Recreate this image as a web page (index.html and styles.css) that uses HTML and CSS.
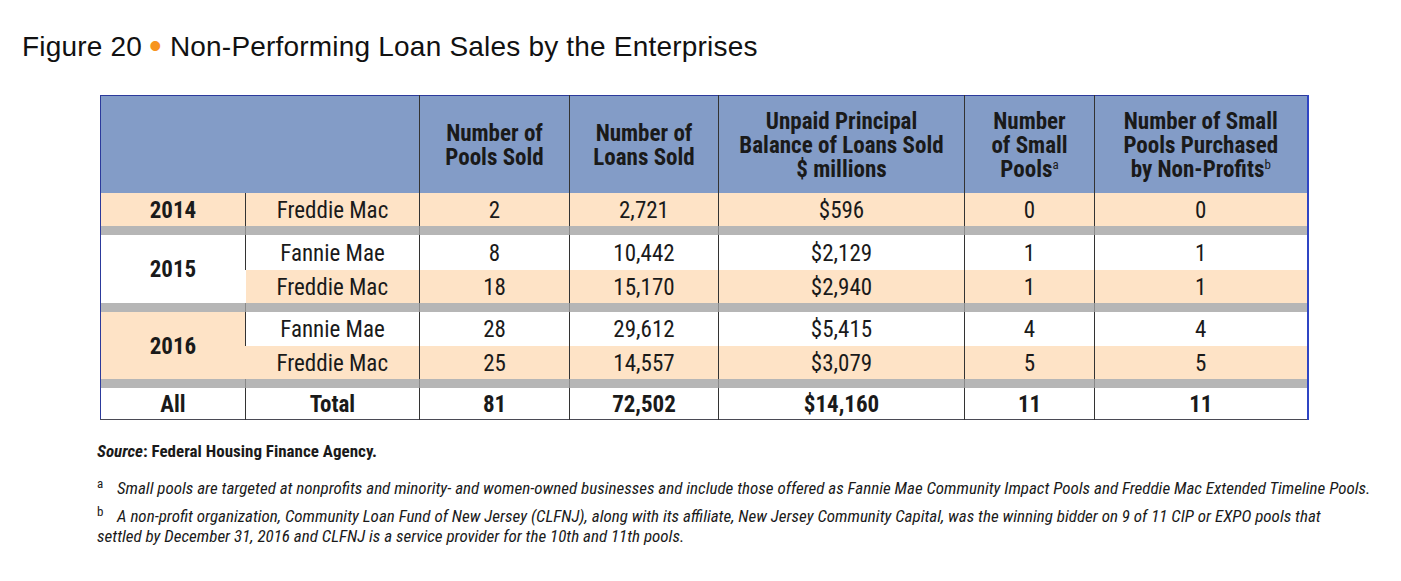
FILE: index.html
```html
<!DOCTYPE html>
<html>
<head>
<meta charset="utf-8">
<link rel="stylesheet" href="styles.css">
</head>
<body>
<div class="page">
  <h1 class="title">Figure 20<span class="dot">•</span>Non-Performing Loan Sales by the Enterprises</h1>
  <table class="grid">
    <colgroup>
      <col class="c1"><col class="c2"><col class="c3"><col class="c4"><col class="c5"><col class="c6"><col class="c7">
    </colgroup>
    <thead>
      <tr class="head">
        <th colspan="2"></th>
        <th>Number of<br>Pools Sold</th>
        <th>Number of<br>Loans Sold</th>
        <th>Unpaid Principal<br>Balance of Loans Sold<br>$ millions</th>
        <th>Number<br>of Small<br>Pools<sup>a</sup></th>
        <th>Number of Small<br>Pools Purchased<br>by Non-Profits<sup>b</sup></th>
      </tr>
    </thead>
    <tbody>
      <tr class="row tan h33">
        <td class="year">2014</td><td>Freddie Mac</td><td>2</td><td>2,721</td><td>$596</td><td>0</td><td>0</td>
      </tr>
      <tr class="sep"><td></td><td></td><td></td><td></td><td></td><td></td><td></td></tr>
      <tr class="row h35">
        <td class="year" rowspan="2">2015</td><td>Fannie Mae</td><td>8</td><td>10,442</td><td>$2,129</td><td>1</td><td>1</td>
      </tr>
      <tr class="row tan h33">
        <td>Freddie Mac</td><td>18</td><td>15,170</td><td>$2,940</td><td>1</td><td>1</td>
      </tr>
      <tr class="sep"><td></td><td></td><td></td><td></td><td></td><td></td><td></td></tr>
      <tr class="row h34">
        <td class="year tancell" rowspan="2">2016</td><td>Fannie Mae</td><td>28</td><td>29,612</td><td>$5,415</td><td>4</td><td>4</td>
      </tr>
      <tr class="row tan h33">
        <td>Freddie Mac</td><td>25</td><td>14,557</td><td>$3,079</td><td>5</td><td>5</td>
      </tr>
      <tr class="sep"><td></td><td></td><td></td><td></td><td></td><td></td><td></td></tr>
      <tr class="row total h32">
        <td>All</td><td>Total</td><td>81</td><td>72,502</td><td>$14,160</td><td>11</td><td>11</td>
      </tr>
    </tbody>
  </table>
  <div class="notes">
    <p class="source"><em>Source</em>: Federal Housing Finance Agency.</p>
    <p class="note"><span class="mark">a</span><i>Small pools are targeted at nonprofits and minority- and women-owned businesses and include those offered as Fannie Mae Community Impact Pools and Freddie Mac Extended Timeline Pools.</i></p>
    <p class="note"><span class="mark">b</span><i>A non-profit organization, Community Loan Fund of New Jersey (CLFNJ), along with its affiliate, New Jersey Community Capital, was the winning bidder on 9 of 11 CIP or EXPO pools that<br>settled by December 31, 2016 and CLFNJ is a service provider for the 10th and 11th pools.</i></p>
  </div>
</div>
</body>
</html>
```
FILE: styles.css
```css
html, body {
  margin: 0;
  padding: 0;
  background: #ffffff;
}
.page {
  width: 1401px;
  height: 581px;
  overflow: hidden;
  color: #1a1a1a;
}
.title {
  margin: 0;
  padding: 32px 0 0 22px;
  font-family: "Liberation Sans", Arial, sans-serif;
  font-weight: normal;
  font-size: 28px;
  line-height: 30px;
  color: #111;
  letter-spacing: 0.2px;
  white-space: nowrap;
}
.dot {
  display: inline-block;
  color: #f7941d;
  font-size: 36px;
  line-height: 0;
  vertical-align: -2px;
  margin: 0 8px 0 7px;
}
.grid {
  margin: 33px 0 0 100px;
  border-collapse: collapse;
  table-layout: fixed;
  width: 1207px;
  border-top: 1px solid #2c3a9c;
  border-left: 1px solid #2c3a9c;
  border-right: 2px solid #2f45c4;
  border-bottom: 1px solid #4a4a55;
  font-family: "Roboto", "Roboto Condensed", sans-serif;
  font-stretch: 75%;
  color: #1a1a1a;
}
.c1 { width: 145px; }
.c2 { width: 174px; }
.c3 { width: 150px; }
.c4 { width: 149px; }
.c5 { width: 246px; }
.c6 { width: 130px; }
.c7 { width: 213px; }
.head th {
  background: #839cc7;
  height: 97px;
  padding: 3px 0 0;
  box-sizing: border-box;
  font-size: 23px;
  line-height: 24px;
  font-weight: bold;
  font-stretch: 80%;
  text-align: center;
  vertical-align: middle;
  border-left: 1px solid #333;
}
.head th:first-child {
  border-left: none;
}
.head sup {
  font-size: 13px;
  line-height: 0;
  vertical-align: 8px;
  font-weight: normal;
}
.row td {
  box-sizing: border-box;
  padding: 3px 0 0;
  font-size: 23px;
  line-height: 26px;
  text-align: center;
  vertical-align: middle;
  border-left: 1px solid #333;
  background: #ffffff;
}
.h32 td { height: 32px; }
.h33 td { height: 33px; }
.h34 td { height: 34px; }
.h35 td { height: 35px; }
.row td:first-child {
  border-left: none;
}
.row.tan td {
  background: #fee3c6;
}
.row td.tancell {
  background: #fee3c6;
}
.year {
  font-weight: bold;
  font-stretch: 78%;
}
.total td {
  font-weight: bold;
  font-stretch: 80%;
}
.sep td {
  height: 9px;
  padding: 0;
  background: #b6b6b6;
  border-left: 1px solid #8a8a8a;
}
.sep td:first-child {
  border-left: none;
}
.notes {
  margin: 21px 0 0 97px;
  font-family: "Roboto", "Roboto Condensed", sans-serif;
  font-stretch: 75%;
  color: #1a1a1a;
}
.notes p {
  margin: 0;
  white-space: nowrap;
}
.source {
  font-size: 17px;
  line-height: 20px;
  font-weight: bold;
  margin-bottom: 17px !important;
}
.source em {
  font-style: italic;
}
.note {
  font-size: 17px;
  line-height: 20px;
  margin-bottom: 8px !important;
}
.mark {
  display: inline-block;
  width: 20px;
  font-size: 13px;
  vertical-align: 6px;
  line-height: 0;
}
```
